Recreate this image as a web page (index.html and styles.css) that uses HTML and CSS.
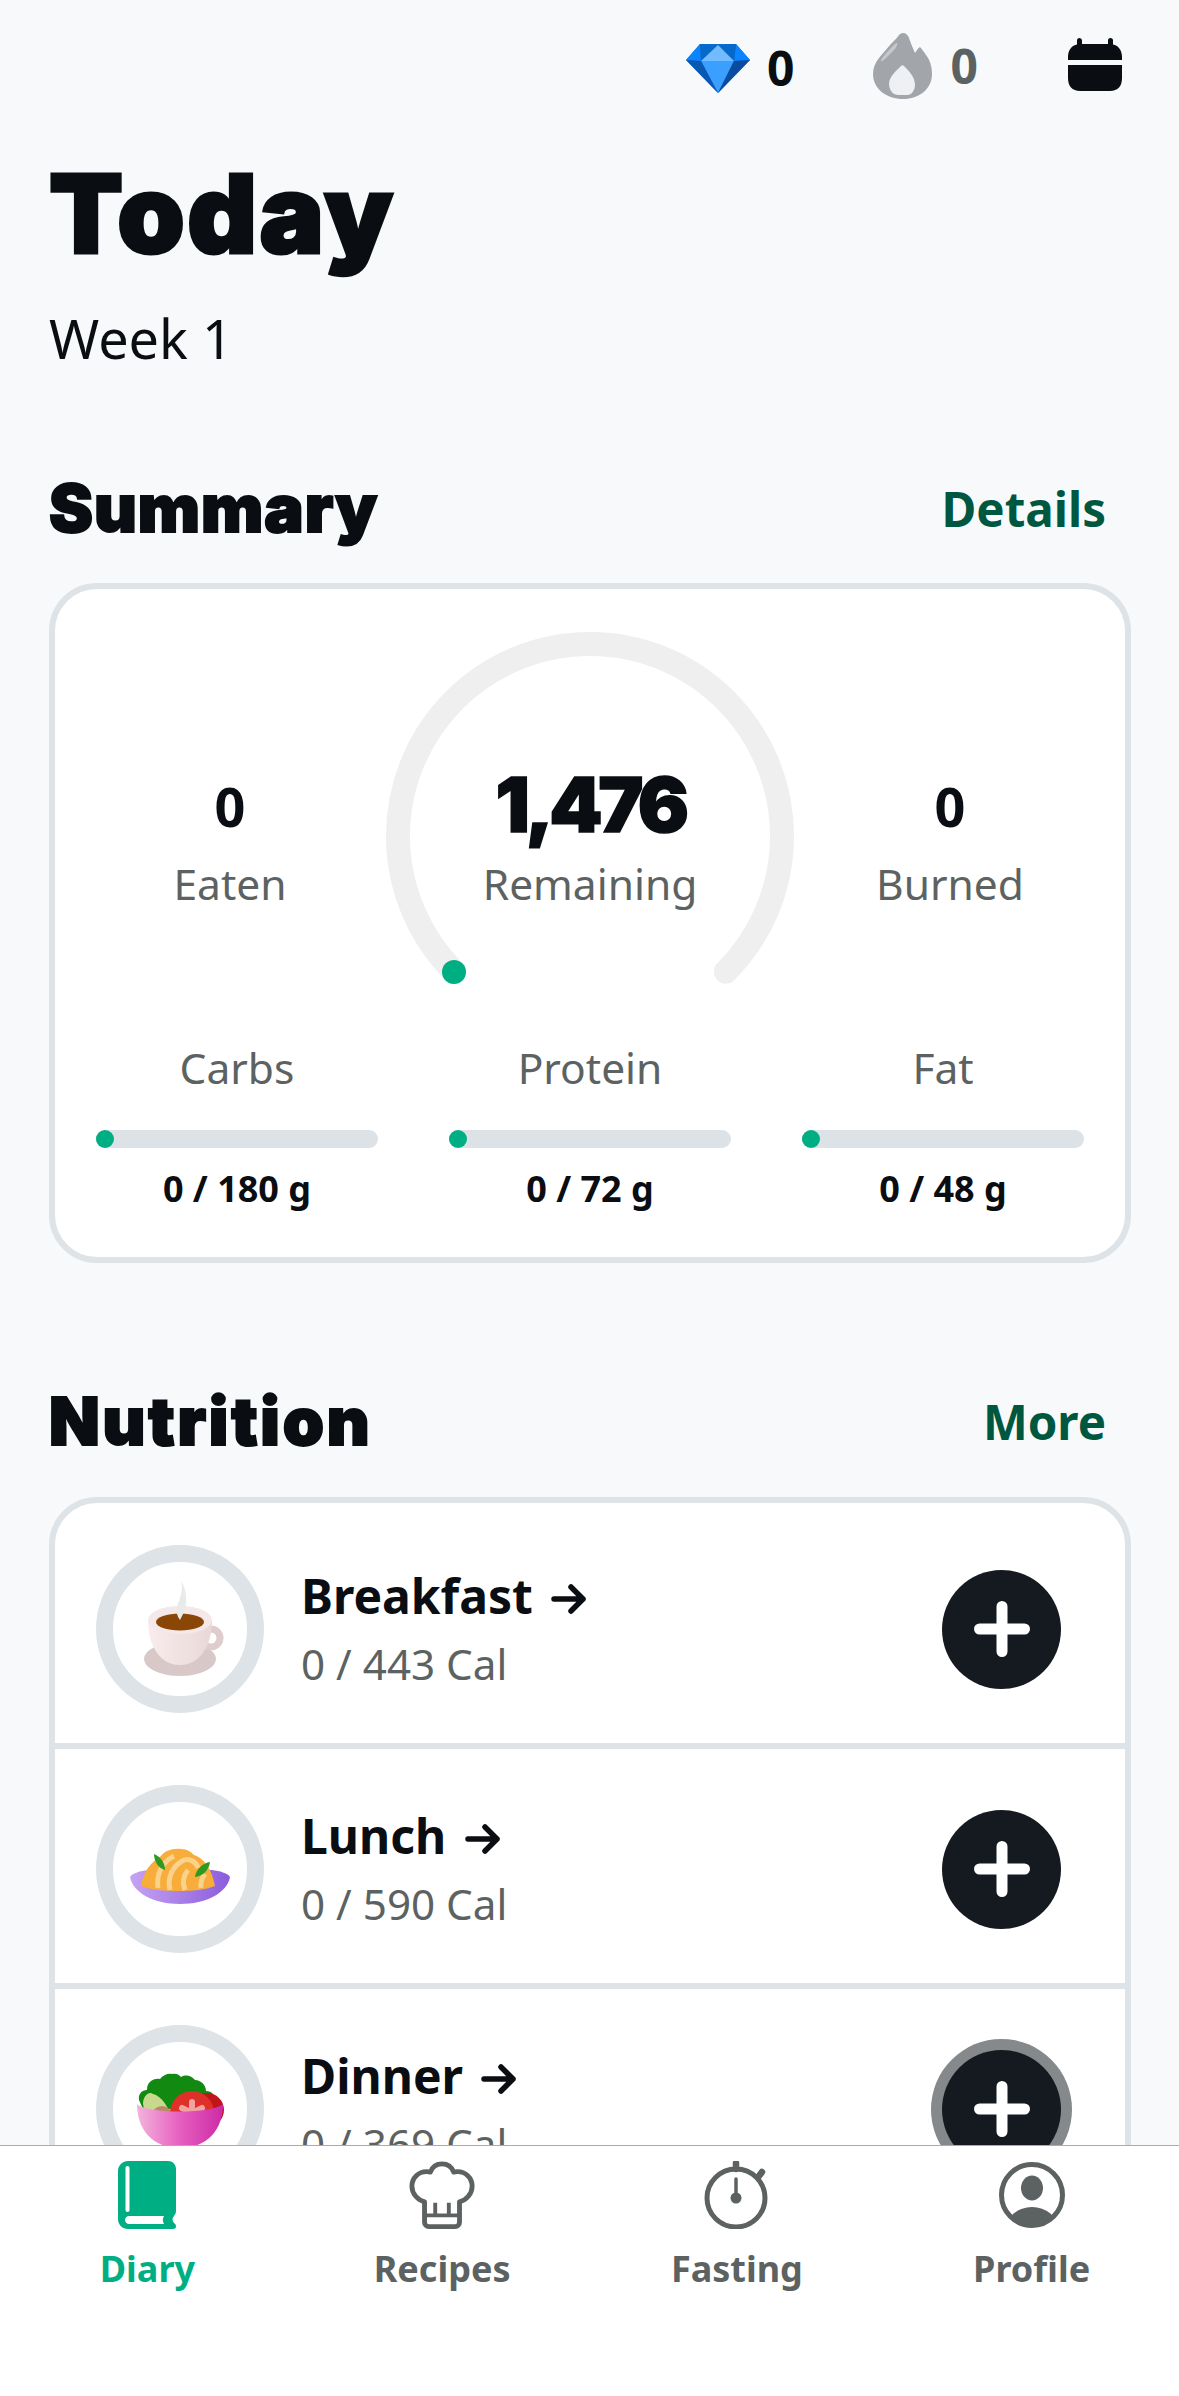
FILE: index.html
```html
<!DOCTYPE html>
<html lang="en">
<head>
    <meta charset="UTF-8">
    <meta name="viewport" content="width=device-width, initial-scale=1.0">
    <title>Today</title>
    <link rel="stylesheet" href="styles.css">
</head>
<body>

    <div class="page">
        <div class="topbar">
            <div class="stat stat-gems">
                <svg class="gem" viewBox="0 0 64 49">
                    <polygon points="14,0 50,0 64,16 32,49 0,16" fill="#0a6fd8"/>
                    <polygon points="0,16 14,0 15,17" fill="#0a84ff"/>
                    <polygon points="64,16 50,0 48,17" fill="#0a84ff"/>
                    <polygon points="14,0 32,1 15,17" fill="#0668c9"/>
                    <polygon points="50,0 32,1 48,17" fill="#0668c9"/>
                    <polygon points="32,1 15,17 48,17" fill="#72bbff"/>
                    <polygon points="15,17 48,17 32,49" fill="#3a9fff"/>
                    <polygon points="0,16 15,17 32,49" fill="#0b58b3"/>
                    <polygon points="64,16 48,17 32,49" fill="#0a4c9f"/>
                </svg>
                <span>0</span>
            </div>
            <div class="stat stat-streak">
                <svg class="flame" viewBox="0 0 59 66">
                    <path d="M30 0c3 0 5 2 6 5 2 6 4 10 6 15 2-3 3-5 5-6 2 2 4 5 6 8 4 5 6 12 6 19 0 15-13 25-29 25S0 56 0 41c0-6 2-11 6-16 3-4 7-8 11-13 4-4 8-8 9-10 1-1 2-2 4-2z" fill="#a2a6ab"/>
                    <path d="M8 27c3-5 8-10 13-15 2-2 4-3 3 0-1 4-7 9-11 13-2 2-6 5-5 2z" fill="#c6c9cc"/>
                    <path d="M28 33c1-1 2-1 3 0 5 5 11 11 11 19 0 4-2 7-4 9-2 1-4 1-8 1s-7 0-9-1c-3-2-5-6-5-10 0-7 7-13 12-18z" fill="#eef0f4"/>
                </svg>
                <span>0</span>
            </div>
            <svg class="calendar" viewBox="0 0 54 53">
                <path d="M9 2.500a2.500 2.500 0 0 1 5 0V6h26V2.500a2.500 2.500 0 0 1 5 0V6.500c5 1 8.500 5 9 11.500V22H0v-4C.5 11.500 4 7.500 9 6.500zM0 27h54v13c0 8-4 13-12 13H12C4 53 0 48 0 40z" fill="#0a0d12"/>
            </svg>
        </div>

        <h1 class="title">Today</h1>
        <p class="week">Week 1</p>

        <div class="section-head head-summary">
            <h2>Summary</h2>
            <a class="head-link">Details</a>
        </div>

        <div class="card summary-card">
            <div class="calories">
                <div class="side">
                    <div class="side-value">0</div>
                    <div class="side-label">Eaten</div>
                </div>
                <div class="gauge">
                    <svg class="gauge-arc" viewBox="0 0 408 352">
                        <path d="M68.200 339.800A192 192 0 1 1 339.800 339.800" fill="none" stroke="#efefef" stroke-width="24" stroke-linecap="round"/>
                        <circle cx="68" cy="340" r="12" fill="#00ae84"/>
                    </svg>
                    <div class="gauge-text">
                        <div class="gauge-value">1,476</div>
                        <div class="side-label">Remaining</div>
                    </div>
                </div>
                <div class="side">
                    <div class="side-value">0</div>
                    <div class="side-label">Burned</div>
                </div>
            </div>
            <div class="macros">
                <div class="macro">
                    <div class="macro-name">Carbs</div>
                    <div class="bar"><div class="bar-dot"></div></div>
                    <div class="macro-value">0 / 180 g</div>
                </div>
                <div class="macro">
                    <div class="macro-name">Protein</div>
                    <div class="bar"><div class="bar-dot"></div></div>
                    <div class="macro-value">0 / 72 g</div>
                </div>
                <div class="macro">
                    <div class="macro-name">Fat</div>
                    <div class="bar"><div class="bar-dot"></div></div>
                    <div class="macro-value">0 / 48 g</div>
                </div>
            </div>
        </div>

        <div class="section-head head-nutrition">
            <h2>Nutrition</h2>
            <a class="head-link">More</a>
        </div>

        <div class="card meals">
            <div class="meal">
                <div class="meal-ring">
                    <svg viewBox="0 0 134 134">
                        <defs>
                            <linearGradient id="cupFill" x1="0" y1="0" x2="1" y2="0">
                                <stop offset="0" stop-color="#f8ecec"/>
                                <stop offset="1" stop-color="#ead8d8"/>
                            </linearGradient>
                        </defs>
                        <ellipse cx="67" cy="97" rx="36" ry="17" fill="#d9c8c8"/>
                        <circle cx="98" cy="76" r="9" fill="none" stroke="#dfcccc" stroke-width="7"/>
                        <path d="M35 58c0 26 12 45 32 45s32-19 32-45z" fill="url(#cupFill)"/>
                        <ellipse cx="67" cy="58" rx="32" ry="14" fill="#f5e8e8"/>
                        <ellipse cx="67" cy="60" rx="24" ry="8.500" fill="#8a4606"/>
                        <path d="M68 19c3 10-2 18-4 26-1 5 0 9 3 13 2-4 5-9 6-16 1-9-1-17-5-23z" fill="#e9eaea"/>
                    </svg>
                </div>
                <div class="meal-text">
                    <div class="meal-name">Breakfast <svg class="arrow" viewBox="0 0 36 30"><path d="M3 15h29M20 3l12 12-12 12" fill="none" stroke="#0a0d12" stroke-width="5.500" stroke-linecap="round" stroke-linejoin="round"/></svg></div>
                    <div class="meal-cal">0 / 443 Cal</div>
                </div>
                <button class="add"><svg viewBox="0 0 56 56"><path d="M28 5.500v45M5.500 28h45" stroke="#fff" stroke-width="11" stroke-linecap="round"/></svg></button>
            </div>
            <div class="meal">
                <div class="meal-ring">
                    <svg viewBox="0 0 134 134">
                        <defs>
                            <linearGradient id="plateFill" x1="0" y1="0" x2="1" y2="0">
                                <stop offset="0" stop-color="#c6a3f2"/>
                                <stop offset="1" stop-color="#8a5cdc"/>
                            </linearGradient>
                        </defs>
                        <path d="M17 75c3-4 10-6 18-7h64c8 1 15 3 18 7-3 16-24 27-50 27S20 91 17 75z" fill="url(#plateFill)"/>
                        <path d="M28 84c2-14 10-24 20-30 3-5 12-8 20-7 6 0 10 3 13 6 10 3 18 14 21 31-10 4-22 5-36 5s-28-1-38-5z" fill="#f8ac3a"/>
                        <path d="M45 86c-2-14 4-26 16-32M57 88c-3-12 2-24 14-30 6-2 12 2 14 8M72 88c-3-8-2-14 3-20M88 86c-1-6 1-10 4-14" fill="none" stroke="#fbd28c" stroke-width="5"/>
                        <path d="M41 52c7 3 11 9 11 16-7-2-11-9-11-16z" fill="#2e9a24"/>
                        <path d="M97 60c-7 1-14 7-15 15 8-1 14-7 15-15z" fill="#2e9a24"/>
                    </svg>
                </div>
                <div class="meal-text">
                    <div class="meal-name">Lunch <svg class="arrow" viewBox="0 0 36 30"><path d="M3 15h29M20 3l12 12-12 12" fill="none" stroke="#0a0d12" stroke-width="5.500" stroke-linecap="round" stroke-linejoin="round"/></svg></div>
                    <div class="meal-cal">0 / 590 Cal</div>
                </div>
                <button class="add"><svg viewBox="0 0 56 56"><path d="M28 5.500v45M5.500 28h45" stroke="#fff" stroke-width="11" stroke-linecap="round"/></svg></button>
            </div>
            <div class="meal">
                <div class="meal-ring">
                    <svg viewBox="0 0 134 134">
                        <defs>
                            <linearGradient id="bowlFill" x1="0" y1="0" x2="1" y2="0">
                                <stop offset="0" stop-color="#f3b4dc"/>
                                <stop offset="0.5" stop-color="#e65fc0"/>
                                <stop offset="1" stop-color="#cc2ba6"/>
                            </linearGradient>
                        </defs>
                        <path d="M26 58c-1-6 3-10 8-10 0-8 6-12 13-11 3-4 8-6 12-5 3-1 7 0 9 3 5-3 11-1 14 3 6 0 11 5 11 11 6 0 9 4 9 10l-2 8H30z" fill="#128a12"/>
                        <path d="M30 62c0-8 6-13 10-10 8 2 16 12 20 28H34z" fill="#c7d98c"/>
                        <ellipse cx="49" cy="73" rx="10" ry="9" fill="#b98a66"/>
                        <circle cx="94" cy="68" r="17" fill="#c0161b"/>
                        <circle cx="79" cy="71" r="22" fill="#e0302a"/>
                        <path d="M79 60v22M69 66l20 10M89 66l-20 10" stroke="#f2a3a0" stroke-width="6" stroke-linecap="round"/>
                        <path d="M24 62c10 10 76 10 86 0 0 26-16 44-43 44S24 88 24 62z" fill="url(#bowlFill)"/>
                    </svg>
                </div>
                <div class="meal-text">
                    <div class="meal-name">Dinner <svg class="arrow" viewBox="0 0 36 30"><path d="M3 15h29M20 3l12 12-12 12" fill="none" stroke="#0a0d12" stroke-width="5.500" stroke-linecap="round" stroke-linejoin="round"/></svg></div>
                    <div class="meal-cal">0 / 369 Cal</div>
                </div>
                <button class="add add-active"><svg viewBox="0 0 56 56"><path d="M28 5.500v45M5.500 28h45" stroke="#fff" stroke-width="11" stroke-linecap="round"/></svg></button>
            </div>
        </div>
    </div>

    <nav class="tabbar">
        <div class="tab tab-active">
            <svg viewBox="0 0 58 68">
                <path d="M10 0h40c4.500 0 8 3.500 8 8v42c0 2-1 3.500-2 5-2 2-2 5 0 7 1.500 1 2 2 2 3.500 0 1.500-1 2.500-3 2.500H10C4.500 68 0 64 0 58V10C0 4.500 4.500 0 10 0z" fill="#00ae84"/>
                <rect x="7.500" y="5" width="4" height="46" rx="2" fill="#fff"/>
                <path d="M11 55h35c-1.500 2.500-1.500 5.500 0 8H11c-2.200 0-4-1.800-4-4s1.800-4 4-4z" fill="#fff"/>
            </svg>
            <span>Diary</span>
        </div>
        <div class="tab">
            <svg viewBox="0 0 68 70" fill="none" stroke="#5c6261" stroke-width="5" stroke-linecap="round" stroke-linejoin="round">
                <path d="M16 42v21c0 2.500 2 4.500 4.500 4.500h27c2.500 0 4.500-2 4.500-4.500V42c7-2 13-8 13-16 0-9-7-15-15-15-2 0-3 .5-4 .5C44 6 40 3 34 3s-10 3-12 8.500c-1 0-2-.5-4-.5C10 11 3 17 3 26c0 8 6 14 13 16z"/>
                <path d="M16 56h36M27 43v13M41 43v13" stroke-width="4" stroke-linecap="butt"/>
            </svg>
            <span>Recipes</span>
        </div>
        <div class="tab">
            <svg viewBox="0 0 66 68" fill="none" stroke="#5c6261" stroke-linecap="round">
                <circle cx="32" cy="37" r="29" stroke-width="5"/>
                <path d="M32 2v6M55 15l3-4" stroke-width="6.500"/>
                <path d="M32 18v19" stroke-width="3.500"/>
                <circle cx="32" cy="37" r="5.500" fill="#5c6261" stroke="none"/>
            </svg>
            <span>Fasting</span>
        </div>
        <div class="tab">
            <svg viewBox="0 0 66 68">
                <defs><clipPath id="faceClip"><circle cx="33" cy="34" r="30"/></clipPath></defs>
                <circle cx="33" cy="34" r="30.500" fill="none" stroke="#5c6261" stroke-width="5"/>
                <ellipse cx="33" cy="27" rx="11" ry="12.500" fill="#5c6261"/>
                <ellipse cx="33" cy="68" rx="26" ry="22" fill="#5c6261" clip-path="url(#faceClip)"/>
            </svg>
            <span>Profile</span>
        </div>
    </nav>

</body>
</html>
```

FILE: styles.css
```css
html, body {
    margin: 0;
    height: 2396px;
    overflow: hidden;
}
body {
    position: relative;
    background-color: #f7f9fb;
    color: #0a0d12;
    font-family: "Noto Sans", "Liberation Sans", sans-serif;
}
h1, h2, p {
    margin: 0;
}
.page {
    padding: 0 49px;
}

/* top bar */
.topbar {
    display: flex;
    justify-content: flex-end;
    align-items: flex-start;
    height: 130px;
    padding-right: 8px;
}
.stat {
    display: flex;
    align-items: center;
    font-size: 48px;
    font-weight: 700;
    line-height: 66px;
}
.stat-gems {
    gap: 17px;
    margin-top: 35px;
    margin-right: 78px;
}
.stat-streak {
    gap: 19px;
    margin-top: 33px;
    margin-right: 90px;
    color: #5c6261;
}
.gem {
    width: 64px;
    height: 49px;
}
.flame {
    width: 59px;
    height: 66px;
}
.calendar {
    width: 54px;
    height: 53px;
    margin-top: 38px;
}

/* headings */
.title, .section-head h2, .gauge-value {
    font-family: Inter, "Liberation Sans", sans-serif;
    font-weight: 900;
}
.title {
    font-size: 108px;
    line-height: 130px;
    letter-spacing: 2.500px;
    margin-top: 19px;
    -webkit-text-stroke: 3px #0a0d12;
}
.week {
    font-size: 54px;
    line-height: 70px;
    margin-top: 24px;
}
.section-head {
    display: flex;
    justify-content: space-between;
    align-items: center;
    height: 80px;
    padding-right: 24px;
}
.section-head h2 {
    font-size: 66px;
    letter-spacing: 1px;
    -webkit-text-stroke: 2px #0a0d12;
}
.head-summary {
    margin-top: 95px;
}
.head-nutrition {
    margin-top: 118px;
}
.head-nutrition h2 {
    letter-spacing: 2.800px;
}
.head-link {
    font-size: 47.500px;
    font-weight: 700;
    color: #00573f;
}

/* cards */
.card {
    box-sizing: border-box;
    background-color: #fff;
    border: 6px solid #dde3e6;
    border-radius: 48px;
    width: 1082px;
}
.summary-card {
    height: 680px;
    margin-top: 35px;
    padding: 43px 41px 0;
}
.calories {
    display: flex;
    justify-content: space-between;
    height: 352px;
}
.side {
    width: 268px;
    text-align: center;
    padding-top: 140px;
}
.side-value {
    font-size: 54px;
    font-weight: 700;
    line-height: 68px;
}
.side-label {
    font-size: 42.500px;
    line-height: 58px;
    color: #5c6261;
    margin-top: 15px;
}
.gauge {
    display: grid;
    width: 408px;
    height: 352px;
}
.gauge-arc {
    grid-area: 1 / 1;
    width: 408px;
    height: 352px;
}
.gauge-text {
    grid-area: 1 / 1;
    text-align: center;
    padding-top: 126px;
}
.gauge-value {
    font-size: 76px;
    line-height: 92px;
    letter-spacing: -4.500px;
    -webkit-text-stroke: 1.500px #0a0d12;
}
.gauge-text .side-label {
    margin-top: 5px;
}
.macros {
    display: grid;
    grid-template-columns: repeat(3, 282px);
    column-gap: 71px;
    margin-top: 55px;
}
.macro {
    text-align: center;
}
.macro-name {
    font-size: 42.500px;
    line-height: 58px;
    color: #5c6261;
}
.bar {
    display: flex;
    height: 18px;
    margin-top: 33px;
    background-color: #dce2e5;
    border-radius: 9px;
}
.bar-dot {
    width: 18px;
    height: 18px;
    border-radius: 50%;
    background-color: #00ae84;
}
.macro-value {
    font-size: 36px;
    font-weight: 700;
    line-height: 48px;
    margin-top: 17px;
}

/* meals */
.meals {
    margin-top: 36px;
    padding-top: 6px;
}
.meal {
    display: flex;
    align-items: center;
    height: 234px;
    padding-left: 41px;
    padding-right: 64px;
    border-bottom: 6px solid #dde3e6;
}
.meal:last-child {
    border-bottom: none;
}
.meal-ring {
    box-sizing: border-box;
    display: flex;
    align-items: center;
    justify-content: center;
    width: 168px;
    height: 168px;
    flex: none;
    border: 17px solid #dde3e6;
    border-radius: 50%;
    margin-top: 6px;
}
.meal-ring svg {
    width: 134px;
    height: 134px;
}
.meal-text {
    flex: 1;
    margin-left: 37px;
    margin-top: 4px;
}
.meal-name {
    font-size: 48px;
    font-weight: 700;
    line-height: 64px;
}
.arrow {
    width: 36px;
    height: 30px;
    margin-left: 6px;
}
.meal-cal {
    font-size: 42.200px;
    line-height: 58px;
    color: #5c6261;
    margin-top: 7px;
}
.add {
    display: flex;
    align-items: center;
    justify-content: center;
    width: 119px;
    height: 119px;
    padding: 0;
    border: none;
    border-radius: 50%;
    background-color: #151a20;
    margin-top: 6px;
}
.add svg {
    width: 56px;
    height: 56px;
}
.add-active {
    box-shadow: 0 0 0 11px #85898b;
}

/* bottom tabs */
.tabbar {
    position: absolute;
    left: 0;
    right: 0;
    bottom: 0;
    height: 250px;
    display: grid;
    grid-template-columns: repeat(4, 1fr);
    background-color: #fff;
    border-top: 1px solid #a9acad;
}
.tab {
    display: flex;
    flex-direction: column;
    align-items: center;
    padding-top: 15px;
    font-size: 36px;
    font-weight: 700;
    color: #5c6261;
}
.tab svg {
    height: 68px;
}
.tab span {
    line-height: 48px;
    margin-top: 16px;
}
.tab-active {
    color: #00ae84;
}
```
